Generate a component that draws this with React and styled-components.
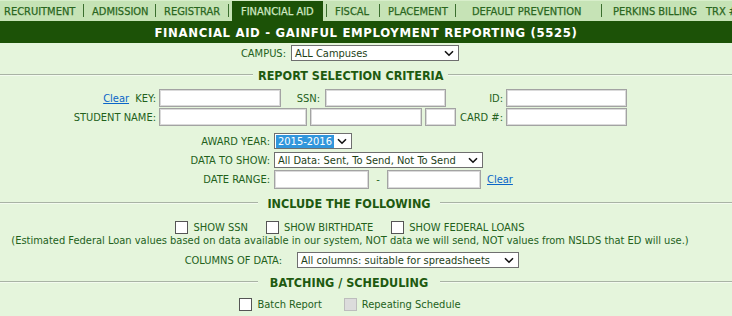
import styled, { createGlobalStyle } from "styled-components";

const GlobalStyle = createGlobalStyle`
  body {
    margin: 0;
    background: #e5f5dc;
    font-family: "DejaVu Sans Condensed", "DejaVu Sans", sans-serif;
    font-size: 11px;
    color: #23611b;
  }
`;

const tabs = [
  { label: "RECRUITMENT", width: 84, pad: 4 },
  { label: "ADMISSION", width: 72, pad: 8 },
  { label: "REGISTRAR", width: 73, pad: 8 },
  { label: "FINANCIAL AID", width: 98, pad: 12, active: true },
  { label: "FISCAL", width: 53, pad: 8 },
  { label: "PLACEMENT", width: 76, pad: 8 },
  { label: "DEFAULT PREVENTION", width: 146, pad: 16 },
  { label: "PERKINS BILLING", width: 100, pad: 11, noSep: true },
  { label: "TRX #", width: 60, pad: 4, noSep: true },
];

function Checkbox({ label, disabled }) {
  return (
    <CheckItem>
      <Box disabled={disabled} />
      <span>{label}</span>
    </CheckItem>
  );
}

function Select({ width, value, selected }) {
  return (
    <SelectBox width={width}>
      <SelectText selected={selected}>{value}</SelectText>
      <svg width="10" height="7" viewBox="0 0 10 7">
        <path d="M1 1.2 L5 5.2 L9 1.2" fill="none" stroke="#111" strokeWidth="1.6" />
      </svg>
    </SelectBox>
  );
}

function Divider({ title, left, min }) {
  return (
    <DividerRow>
      <Line style={{ flexBasis: left }} />
      <DividerTitle min={min}>{title}</DividerTitle>
      <Line grow />
    </DividerRow>
  );
}

export default function App() {
  return (
    <Page>
      <GlobalStyle />
      <TabBar>
        {tabs.map((t) => (
          <TabCell key={t.label} width={t.width}>
            <Tab active={t.active} pad={t.pad}>
              {t.label}
            </Tab>
            {!t.noSep && <Sep />}
          </TabCell>
        ))}
      </TabBar>
      <TitleBar>FINANCIAL AID - GAINFUL EMPLOYMENT REPORTING (5525)</TitleBar>

      <Row mt={2}>
        <Label width={286}>CAMPUS:</Label>
        <Gap w={5} />
        <Select width={168} value="ALL Campuses" />
      </Row>

      <Divider title="REPORT SELECTION CRITERIA" left={253} min={195} />

      <Row mt={6}>
        <Label width={156}>
          <Link>Clear</Link>&nbsp; KEY:
        </Label>
        <Gap w={3} />
        <Input width={122} />
        <Label width={39}>SSN:</Label>
        <Gap w={5} />
        <Input width={121} />
        <Label width={57}>ID:</Label>
        <Gap w={3} />
        <Input width={121} />
      </Row>
      <Row mt={1}>
        <Label width={156}>STUDENT NAME:</Label>
        <Gap w={3} />
        <Input width={148} />
        <Gap w={3} />
        <Input width={112} />
        <Gap w={3} />
        <Input width={31} />
        <Label width={47}>CARD #:</Label>
        <Gap w={3} />
        <Input width={121} />
      </Row>

      <Row mt={7}>
        <Label width={270}>AWARD YEAR:</Label>
        <Gap w={4} />
        <Select width={78} value="2015-2016" selected />
      </Row>
      <Row mt={3}>
        <Label width={270}>DATA TO SHOW:</Label>
        <Gap w={4} />
        <Select width={209} value="All Data: Sent, To Send, Not To Send" />
      </Row>
      <Row mt={2}>
        <Label width={270}>DATE RANGE:</Label>
        <Gap w={4} />
        <Input width={95} h={19} />
        <Dash>-</Dash>
        <Input width={94} h={19} />
        <Gap w={6} />
        <Link>Clear</Link>
      </Row>

      <Divider title="INCLUDE THE FOLLOWING" left={258} min={182} />

      <CenterRow mt={9} gap={18}>
        <Checkbox label="SHOW SSN" />
        <Checkbox label="SHOW BIRTHDATE" />
        <Checkbox label="SHOW FEDERAL LOANS" />
      </CenterRow>
      <Note>
        (Estimated Federal Loan values based on data available in our system, NOT data we will
        send, NOT values from NSLDS that ED will use.)
      </Note>
      <Row mt={4}>
        <Label width={282}>COLUMNS OF DATA:</Label>
        <Gap w={15} />
        <Select width={222} value="All columns: suitable for spreadsheets" />
      </Row>

      <Divider title="BATCHING / SCHEDULING" left={258} min={182} />

      <CenterRow mt={7} gap={22}>
        <Checkbox label="Batch Report" />
        <Checkbox label="Repeating Schedule" disabled />
      </CenterRow>
    </Page>
  );
}

const Page = styled.div`
  width: 732px;
  height: 316px;
  overflow: hidden;
`;

const TabBar = styled.div`
  display: flex;
  height: 21px;
  background: #c6e3b6;
  border-top: 1px solid #d8eecb;
  box-sizing: border-box;
  overflow: hidden;
  white-space: nowrap;
`;

const TabCell = styled.div`
  flex: 0 0 ${(p) => p.width}px;
  display: flex;
  align-items: stretch;
`;

const Tab = styled.div`
  flex: 1;
  display: flex;
  align-items: center;
  padding-left: ${(p) => (p.active ? p.pad - 3 : p.pad)}px;
  margin-left: ${(p) => (p.active ? 3 : 0)}px;
  margin-right: ${(p) => (p.active ? 3 : 0)}px;
  background: ${(p) => (p.active ? "#1c5207" : "transparent")};
  color: ${(p) => (p.active ? "#cfe8c2" : "#2a6620")};
  font-size: 11px;
  -webkit-text-stroke: 0.25px currentColor;
`;

const Sep = styled.div`
  width: 1px;
  margin: 3px 0 4px;
  background: #3b6f2f;
`;

const TitleBar = styled.div`
  height: 22px;
  background: #1c5207;
  color: #ffffff;
  font-weight: bold;
  font-size: 13px;
  display: flex;
  align-items: center;
  justify-content: center;
  letter-spacing: 0.65px;
`;

const Row = styled.div`
  display: flex;
  align-items: center;
  margin-top: ${(p) => p.mt || 0}px;
  white-space: nowrap;
`;

const CenterRow = styled(Row)`
  justify-content: center;
  gap: ${(p) => p.gap}px;
  padding-right: 32px;
  height: 14px;
`;

const Label = styled.div`
  flex: 0 0 ${(p) => p.width}px;
  text-align: right;
  color: #23611b;
`;

const Gap = styled.div`
  flex: 0 0 ${(p) => p.w}px;
`;

const Input = styled.div`
  flex: 0 0 ${(p) => p.width}px;
  height: ${(p) => p.h || 18}px;
  box-sizing: border-box;
  background: #fff;
  border: 1px solid #a3a3a3;
  box-shadow: inset 0 0 0 1px #dadada;
`;

const SelectBox = styled.div`
  flex: 0 0 ${(p) => p.width}px;
  height: 16px;
  box-sizing: border-box;
  background: #fff;
  border: 1px solid #6f6f6f;
  display: flex;
  align-items: center;
  justify-content: space-between;
  padding: 0 4px 0 1px;
  overflow: hidden;

  svg {
    flex: none;
  }
`;

const SelectText = styled.span`
  color: ${(p) => (p.selected ? "#fff" : "#1e3f17")};
  background: ${(p) => (p.selected ? "#3196dc" : "transparent")};
  padding: 0 2px;
  line-height: 13px;
`;

const Link = styled.span`
  color: #0a66c8;
  text-decoration: underline;
`;

const Dash = styled.div`
  flex: 0 0 18px;
  text-align: center;
`;

const DividerRow = styled.div`
  display: flex;
  align-items: center;
  height: 16px;
  margin-top: 6px;
`;

const Line = styled.div`
  flex: ${(p) => (p.grow ? "1 1 auto" : "0 0 auto")};
  height: 2px;
  border-top: 1px solid #a9b3a5;
  border-bottom: 1px solid #f3fbef;
  box-sizing: border-box;
`;

const DividerTitle = styled.div`
  min-width: ${(p) => p.min}px;
  padding: 0 5px;
  box-sizing: border-box;
  text-align: center;
  font-weight: bold;
  font-size: 12.5px;
  color: #1e5a10;
  white-space: nowrap;
`;

const CheckItem = styled.div`
  display: flex;
  align-items: center;
  gap: 5px;
`;

const Box = styled.span`
  width: 13px;
  height: 13px;
  box-sizing: border-box;
  border: 1px solid ${(p) => (p.disabled ? "#bdbdbd" : "#555")};
  background: ${(p) => (p.disabled ? "#dcdcdc" : "#fff")};
`;

const Note = styled.div`
  text-align: center;
  padding-right: 32px;
  line-height: 14px;
  white-space: nowrap;
`;
